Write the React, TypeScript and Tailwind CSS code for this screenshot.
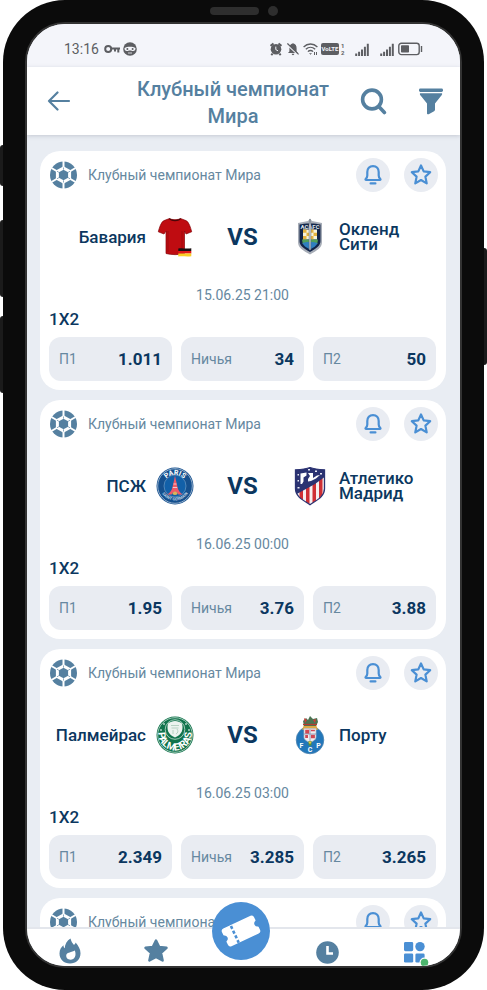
import type { ReactNode } from 'react'

type Team = { name: string; crest: ReactNode }
type Odd = { label: string; value: string }
type Match = { id: number; home: Team; away: Team; date: string; odds: Odd[] }

const LEAGUE = 'Клубный чемпионат Мира'

const MATCHES: Match[] = [
  {
    id: 1,
    home: { name: 'Бавария', crest: <BayernShirt /> },
    away: { name: 'Окленд Сити', crest: <AucklandCrest /> },
    date: '15.06.25 21:00',
    odds: [
      { label: 'П1', value: '1.011' },
      { label: 'Ничья', value: '34' },
      { label: 'П2', value: '50' },
    ],
  },
  {
    id: 2,
    home: { name: 'ПСЖ', crest: <ParisCrest /> },
    away: { name: 'Атлетико Мадрид', crest: <AtleticoCrest /> },
    date: '16.06.25 00:00',
    odds: [
      { label: 'П1', value: '1.95' },
      { label: 'Ничья', value: '3.76' },
      { label: 'П2', value: '3.88' },
    ],
  },
  {
    id: 3,
    home: { name: 'Палмейрас', crest: <PalmeirasCrest /> },
    away: { name: 'Порту', crest: <PortoCrest /> },
    date: '16.06.25 03:00',
    odds: [
      { label: 'П1', value: '2.349' },
      { label: 'Ничья', value: '3.285' },
      { label: 'П2', value: '3.265' },
    ],
  },
]

export default function App() {
  return (
    <div className="flex h-screen bg-white font-['Roboto',sans-serif]">
      <div className="flex w-[3px] shrink-0 flex-col pt-[145px]">
        <div className="h-[41px] rounded-l-sm bg-[#1b1b1b]" />
        <div className="mt-[34px] h-[77px] rounded-l-sm bg-[#1b1b1b]" />
        <div className="mt-[19px] h-[77px] rounded-l-sm bg-[#1b1b1b]" />
      </div>

      <div className="flex min-w-0 flex-1 flex-col rounded-[62px] bg-[#0b0b0b] px-[22px] pb-[22px]">
        <div className="flex h-[22px] shrink-0 items-center justify-center gap-[9px]">
          <div className="h-2 w-[49px] rounded-full bg-[#2e2e2e]" />
          <div className="size-[10px] rounded-full bg-[#2e2e2e]" />
        </div>
        <div className="flex min-h-0 flex-1 flex-col overflow-hidden rounded-[40px] border-2 border-[#333333] bg-[#e9edf3]">
          <StatusBar />
          <Header />
          <main className="flex min-h-0 flex-1 flex-col gap-[10px] overflow-hidden pt-4 pr-[14px] pl-[13px]">
            {MATCHES.map((match) => (
              <MatchCard key={match.id} match={match} />
            ))}
            <article className="shrink-0 rounded-[20px] bg-white pt-[7px] pr-[10px] pb-5 pl-[9px]">
              <CardHeader />
            </article>
          </main>
          <BottomNav />
        </div>
      </div>

      <div className="w-[3px] shrink-0 pt-[248px]">
        <div className="h-[117px] rounded-r-sm bg-[#1b1b1b]" />
      </div>
    </div>
  )
}

function StatusBar() {
  return (
    <div className="flex h-[43px] shrink-0 items-center bg-[#f4f5fa] px-[37px] pt-[7px] text-[#5d5e62]">
      <span className="text-[14px] leading-5">13:16</span>
      <svg className="ml-[5px] h-4 w-[16px]" viewBox="0 0 16 16" fill="none" stroke="currentColor" strokeWidth="2">
        <circle cx="4.200" cy="8" r="3" />
        <path d="M7 7.600h9M14.300 8v3.600M11 8v2.600" />
      </svg>
      <svg className="ml-[3px] size-[14px]" viewBox="0 0 14 14">
        <circle cx="7" cy="7" r="6.800" fill="currentColor" />
        <path d="M1.600 6C4 4.400 10 4.400 12.400 6c.5 1.500-.6 3-2.200 3-1.200 0-2-.6-3.200-.6S5 9 3.800 9C2.200 9 1.100 7.500 1.600 6z" fill="#f4f5fa" />
        <circle cx="4.400" cy="6.900" r="1" fill="currentColor" />
        <circle cx="9.600" cy="6.900" r="1" fill="currentColor" />
        <path d="M5 11h4" stroke="#f4f5fa" strokeWidth=".8" />
      </svg>

      <div className="ml-auto flex items-center">
        <svg className="h-[14px] w-3" viewBox="0 0 12 14">
          <circle cx="6" cy="7.200" r="5.300" fill="currentColor" />
          <path d="M.6 3.900L3.500 1.400M11.400 3.900L8.500 1.400M2.600 11.600l-1.300 1.500M9.400 11.600l1.300 1.500" stroke="currentColor" strokeWidth="2" />
          <path d="M5.800 4.600v3l2.200 1.200" fill="none" stroke="#f4f5fa" strokeWidth="1" />
        </svg>
        <svg className="ml-[5px] h-[14px] w-3" viewBox="0 0 12 14">
          <path d="M6 1.200c2.600.6 3.600 2.500 3.600 5V9.500l1.400 1.600H1l1.400-1.600V6.200C2.400 3.700 3.400 1.800 6 1.200zM4.700 11.800h2.600c0 1.800-2.600 1.800-2.600 0z" fill="currentColor" />
          <path d="M0 2.600l11.500 10.600" stroke="#f4f5fa" strokeWidth="1.400" />
          <path d="M.4 1.400l11.200 11" stroke="currentColor" strokeWidth="1.300" />
        </svg>
        <svg className="ml-1 h-[14px] w-[15px]" viewBox="0 0 15 14" fill="none" stroke="currentColor" strokeWidth="1.300">
          <path d="M.6 5c4-4 9.800-4 13.800 0M2.800 7.300c2.800-2.700 6.600-2.700 9.400 0M4.900 9.600c1.500-1.500 3.700-1.500 5.200 0" />
          <path d="M6 11.200h3l-1.500 1.600z" fill="currentColor" stroke="none" />
          <path d="M11.500 10v3M13.500 10v3" strokeWidth="1" />
        </svg>
        <span className="ml-[3px] flex h-3 w-[18px] items-center justify-center rounded-xs bg-[#5d5e62] text-[6px] leading-3 font-bold text-[#f4f5fa]">
          VoLTE
        </span>
        <span className="ml-[2px] flex w-1 flex-col text-[6px] leading-[7px] font-bold">
          <span>1</span>
          <span>2</span>
        </span>
        <SignalIcon className="ml-[10px] h-[13px] w-[14px]" />
        <SignalIcon className="ml-[11px] h-[13px] w-[14px]" />
        <svg className="ml-1 h-[14px] w-[25px]" viewBox="0 0 25 14">
          <rect x=".8" y="1.200" width="20.400" height="11.400" rx="2.600" fill="none" stroke="currentColor" strokeWidth="1.400" />
          <rect x="3" y="3.200" width="8" height="7.400" rx=".8" fill="currentColor" />
          <rect x="22.800" y="4" width="1.400" height="6" fill="currentColor" />
        </svg>
      </div>
    </div>
  )
}

function SignalIcon({ className }: { className: string }) {
  return (
    <svg className={className} viewBox="0 0 14 13" fill="currentColor">
      <path d="M.2 10.500h2V13H.2zM3.100 8.800h2V13h-2zM6 6.400h2V13H6zM8.900 3.800h2V13h-2zM11.800.8h2V13h-2z" />
    </svg>
  )
}

function Header() {
  return (
    <header className="relative flex h-[68px] shrink-0 items-center bg-white pr-[15px] pl-5 text-[#5580a0] shadow-[0_1px_4px_rgba(90,100,120,0.25)]">
      <button type="button" aria-label="Назад" className="flex size-6 items-center justify-center">
        <svg className="h-5 w-6" viewBox="0 0 24 20" fill="none" stroke="currentColor" strokeWidth="2.200" strokeLinecap="round" strokeLinejoin="round">
          <path d="M22 10H2M10.500 1.500L2 10l8.500 8.500" />
        </svg>
      </button>
      <h1 className="min-w-0 flex-1 pt-1 pr-6 pl-[60px] text-center text-[20px] leading-[27px] font-medium">{LEAGUE}</h1>
      <button type="button" aria-label="Поиск" className="flex size-7 items-center justify-center">
        <svg className="size-7" viewBox="0 0 28 28" fill="none" stroke="currentColor" strokeWidth="3.600" strokeLinecap="round">
          <circle cx="13" cy="12.500" r="9.400" />
          <path d="M19.800 19.500l5.600 6" />
        </svg>
      </button>
      <button type="button" aria-label="Фильтр" className="ml-[30px] flex size-7 items-center justify-center">
        <svg className="size-7" viewBox="0 0 28 28" fill="currentColor">
          <rect x="2" y="1.500" width="24" height="3.400" rx="1.400" />
          <path d="M3 6.300h22c.4 1-.1 1.700-.8 2.500l-6.200 7.700v6.300c0 .7-.3 1-.9 1.400l-5.400 3c-1 .4-1.700 0-1.700-1V16.500L3.800 8.800C3.100 8 2.600 7.300 3 6.300z" />
        </svg>
      </button>
    </header>
  )
}

function CardHeader() {
  return (
    <div className="-mr-[2px] flex items-center">
      <BallIcon />
      <span className="ml-[11px] flex-1 text-[14px] leading-5 text-[#6688a0]">{LEAGUE}</span>
      <button type="button" aria-label="Уведомления" className="flex size-[34px] items-center justify-center rounded-full bg-[#e9ecf2] text-[#4a8fd4]">
        <svg className="size-[22px]" viewBox="0 0 22 22" fill="none" stroke="currentColor" strokeWidth="2.200" strokeLinecap="round" strokeLinejoin="round">
          <path d="M11 2.200c-3.600 0-5.700 2.500-5.700 5.800v3.600c0 1.600-.6 2.500-1.500 3.200-.6.500-.3 1.200.4 1.200h13.600c.7 0 1-.7.4-1.200-.9-.7-1.500-1.600-1.500-3.200V8c0-3.300-2.100-5.800-5.700-5.800z" />
          <path d="M8.600 19.400h4.800" />
        </svg>
      </button>
      <button type="button" aria-label="В избранное" className="ml-[14px] flex size-[34px] items-center justify-center rounded-full bg-[#e9ecf2] text-[#4a8fd4]">
        <svg className="size-[22px]" viewBox="0 0 22 22" fill="none" stroke="currentColor" strokeWidth="2.200" strokeLinejoin="round">
          <path d="M11 1.500l2.700 5.900 6.500.8-4.800 4.400 1.300 6.800L11 16l-5.700 3.400 1.300-6.800L1.800 8.200l6.500-.8z" />
        </svg>
      </button>
    </div>
  )
}

function MatchCard({ match }: { match: Match }) {
  return (
    <article className="shrink-0 rounded-[20px] bg-white pt-[7px] pr-[10px] pb-[9px] pl-[9px]">
      <CardHeader />
      <div className="mt-5 grid h-[50px] grid-cols-[1fr_auto_1fr] items-center text-[#0b3760]">
        <div className="flex items-center justify-end gap-[10px]">
          <span className="text-right text-[17px] leading-[15px] font-medium">{match.home.name}</span>
          {match.home.crest}
        </div>
        <span className="w-[97px] text-center text-[24px] leading-7 font-bold">VS</span>
        <div className="flex items-center gap-[10px]">
          {match.away.crest}
          <span className="text-[17px] leading-[15px] font-medium">{match.away.name}</span>
        </div>
      </div>
      <p className="mt-[23px] text-center text-[14px] leading-5 text-[#6688a0]">{match.date}</p>
      <h2 className="mt-1 text-[17px] leading-5 font-medium text-[#0b3760]">1X2</h2>
      <div className="mt-2 grid grid-cols-3 gap-[9px]">
        {match.odds.map((odd) => (
          <button
            key={odd.label}
            type="button"
            className="flex h-11 items-center justify-between rounded-[12px] bg-[#e9ecf2] px-[10px]"
          >
            <span className="text-[14px] leading-5 text-[#6688a0]">{odd.label}</span>
            <span className="text-[17px] leading-5 font-bold text-[#0b3760]">{odd.value}</span>
          </button>
        ))}
      </div>
    </article>
  )
}

function BottomNav() {
  const item = 'flex flex-1 justify-center pt-[9px]'
  return (
    <nav className="relative flex h-[39px] shrink-0 border-t-2 border-[#e3e6ec] bg-white pr-1 text-[#5580a0]">
      <a href="#hot" aria-label="Горячее" className={item}>
        <svg className="h-[26px] w-[22px]" viewBox="0 0 22 26">
          <path d="M11.500.5c.8 3 1.800 4.500 3.500 6.500 1-.7 1.400-1.500 1.600-2.400C19.500 8 21.500 11.500 21.500 15.200 21.500 21.500 17 25.500 11 25.500S.5 21.500.5 15.500c0-4 1.800-6.500 4-8.200 0 1.300.3 2.200 1.200 3C6 6 8 2.500 11.500.5z" fill="currentColor" />
          <path d="M15.800 12.500c2 5-.3 9.300-4.300 9.300-3 0-4.500-2-4.300-4.200.2-3.400 4.300-2.800 8.600-5.100z" fill="white" />
        </svg>
      </a>
      <a href="#favorites" aria-label="Избранное" className={item}>
        <svg className="size-[26px]" viewBox="0 0 26 26" fill="currentColor" stroke="currentColor" strokeWidth="2.500" strokeLinejoin="round">
          <path d="M13 2.500l3.200 6.500 7.300.8-5.500 5.100 1.600 7.600L13 18.800l-6.600 3.700L8 14.900 2.500 9.800 9.800 9z" />
        </svg>
      </a>
      <div className="relative flex-1">
        <a
          href="#coupon"
          aria-label="Купон"
          className="absolute -top-[27px] left-1/2 flex size-[58px] -translate-x-1/2 items-center justify-center rounded-full bg-[#4a8fd4]"
        >
          <svg className="h-[34px] w-[40px]" viewBox="0 0 40 34">
            <g transform="rotate(-25 20 17)">
              <path d="M5 8h30c1.200 0 2 .8 2 2v3.200a4 4 0 0 0 0 7.600V24c0 1.200-.8 2-2 2H5c-1.200 0-2-.8-2-2v-3.200a4 4 0 0 0 0-7.600V10c0-1.200.8-2 2-2z" fill="white" stroke="white" strokeWidth="1.400" strokeLinejoin="round" />
              <path d="M13 8.200v18.500" stroke="#4a8fd4" strokeWidth="2.600" strokeDasharray="3.200 2" />
            </g>
          </svg>
        </a>
      </div>
      <a href="#history" aria-label="История" className={item}>
        <svg className="size-[26px]" viewBox="0 0 26 26">
          <circle cx="13.500" cy="14.500" r="11.300" fill="currentColor" />
          <path d="M13.500 8v7.500H19" fill="none" stroke="white" strokeWidth="2.600" />
        </svg>
      </a>
      <a href="#menu" aria-label="Меню" className={item}>
        <svg className="h-[30px] w-[26px] overflow-visible" viewBox="-2 -2 26 30" fill="#4a8fd4">
          <rect x="2" y="2" width="9.200" height="9.200" rx="1.400" />
          <circle cx="18" cy="6.600" r="4.700" />
          <rect x="2" y="13.400" width="9.200" height="9.200" rx="1.400" />
          <rect x="13.400" y="13.400" width="9.200" height="9.200" rx="1.400" />
          <circle cx="22.500" cy="22.500" r="5" fill="white" />
          <circle cx="22.500" cy="22.500" r="3.800" fill="#4cb56d" />
        </svg>
      </a>
    </nav>
  )
}

function BallIcon() {
  return (
    <svg className="size-7 shrink-0" viewBox="0 0 28 28">
      <circle cx="14.500" cy="14" r="13.500" fill="#5580a0" />
      <path d="M14.500 5.200l7.600 4.400v8.800l-7.600 4.400-7.600-4.400V9.600z" fill="white" />
      <path d="M14.500 0v6M14.500 22v6M2.400 7l5.200 3M21.400 18l5.200 3M2.400 21l5.200-3M21.400 10l5.200-3" stroke="white" strokeWidth="2" />
      <path d="M14.500 8.700l4.600 2.650v5.300l-4.600 2.650-4.600-2.650v-5.300z" fill="#5580a0" />
      <path d="M9.900 11.350L8 10.200M19.100 11.350L21 10.200M9.900 16.650L8 17.800M19.100 16.650L21 17.800M14.500 8.700V6.500M14.500 19.300v2.200" stroke="#8fabc0" strokeWidth="1" />
    </svg>
  )
}

function BayernShirt() {
  return (
    <svg className="h-10 w-[38px] shrink-0" viewBox="0 0 38 40">
      <path d="M13.500 1.500C15 3 23 3 24.500 1.500l6 2.300c2.500 1.800 4 6.500 5.200 11L30 17l-1.500-3v22.500c-5 1.500-13.500 1.500-18.500 0V14l-2 3-5.700-2.200C3.500 10.300 5 5.600 7.500 3.800z" fill="#bf0c11" stroke="#850509" strokeWidth=".7" />
      <path d="M13.500 1.500c1.500 2.800 9.500 2.800 11 0" fill="none" stroke="#4a0508" strokeWidth="1.400" />
      <path d="M12 14v21M26 14v21" stroke="#9f0a0e" strokeWidth="1" />
      <path d="M22.300 31.500c4-.8 8 .5 13-.2V34H22.300z" fill="#181010" />
      <path d="M22.300 34h13v2.600h-13z" fill="#e01818" />
      <path d="M22.300 36.600h13v2.600c-5 .8-9-.5-13 .3z" fill="#f9cf24" />
    </svg>
  )
}

function AucklandCrest() {
  return (
    <svg className="h-10 w-[38px] shrink-0" viewBox="0 0 38 40">
      <path d="M19 1.500l2 2.500 10 2v19c0 6-5 8.500-12 12.500C12 33.500 7 31 7 25V6l10-2z" fill="#a7adb7" />
      <path d="M8.500 7.500C13 6 25 6 29.500 7.500V24c0 5-4.500 7.500-10.500 11C13 31.500 8.500 29 8.500 24z" fill="#122448" />
      <text x="19" y="11.500" fontSize="6" fontWeight="700" textAnchor="middle" fill="#dfe4ec">ACAFC</text>
      <path d="M12 12.500h14v10H12z" fill="#f7f3dc" />
      <path d="M12 12.500h3.500v3.300H12zM19 12.500h3.500v3.300H19zM15.500 15.800H19v3.300h-3.500zM22.500 15.800H26v3.300h-3.500zM12 19.100h3.500v3.400H12zM19 19.100h3.500v3.400H19z" fill="#e5b440" />
      <path d="M11 22.500h16l-.8 4.500H11.800z" fill="#51a05a" />
      <path d="M11.300 26c3-1.500 12.400-1.500 15.400 0-1.500 3-4 4.500-7.700 6.500-3.700-2-6.200-3.500-7.700-6.500z" fill="#2f7fc0" />
      <path d="M19 2l1 6-.3 25h-1.400L18 8z" fill="#d7dbe1" stroke="#59616e" strokeWidth=".5" />
    </svg>
  )
}

function ParisCrest() {
  return (
    <svg className="size-[38px] shrink-0" viewBox="0 0 38 38">
      <circle cx="19" cy="19" r="18.500" fill="#15508e" />
      <circle cx="19" cy="19" r="17.300" fill="none" stroke="#c8d6e4" strokeWidth=".7" />
      <circle cx="19" cy="19" r="11" fill="#1260a8" stroke="#8fb2d3" strokeWidth=".5" />
      <path id="paris-top" d="M7.400 18A11.700 11.700 0 0 1 30.600 18" fill="none" />
      <text fontSize="7" fontWeight="700" fill="white" textAnchor="middle">
        <textPath href="#paris-top" startOffset="50%">PARIS</textPath>
      </text>
      <path id="paris-bottom" d="M3.800 21A15.500 15.500 0 0 0 34.200 21" fill="none" />
      <text fontSize="4" fontWeight="700" fill="#bcd0e4" textAnchor="middle">
        <textPath href="#paris-bottom" startOffset="50%">SAINT-GERMAIN</textPath>
      </text>
      <path d="M19 8.500l1 5 1.600 7c.8 3 2.400 5.500 5.200 7h-4.500c-1.500-3.200-5-3.200-6.600 0h-4.500c2.800-1.500 4.400-4 5.200-7l1.600-7z" fill="#ee5a68" />
      <path d="M16.800 20.500h4.400M17.500 17h3" stroke="#f3d4da" strokeWidth=".9" />
      <path d="M16.500 27c0-3.500 5-3.500 5 0-1.500 1.200-3.500 1.200-5 0z" fill="#d9b65a" />
    </svg>
  )
}

function AtleticoCrest() {
  return (
    <svg className="h-10 w-[38px] shrink-0" viewBox="0 0 38 40">
      <clipPath id="atletico-shield">
        <path d="M4.500 3.800C10 3.500 15 3 19 1.500c4 1.500 9 2 14.500 2.300v19c0 8-8 11.500-14.500 16C12.500 34.300 4.500 30.800 4.500 22.800z" />
      </clipPath>
      <g clipPath="url(#atletico-shield)">
        <path d="M0 0h38v40H0z" fill="#f6eeee" />
        <path d="M8.500 12H12v28H8.500zM15 12h3.500v28H15zM21.500 12H25v28h-3.500zM28 12h3.500v28H28z" fill="#cf2f34" />
        <path d="M0 0h38v8L24 18 4 29H0z" fill="#2b3372" />
        <path d="M9.500 18V7.500l6-1v3l-3 2v4l-1.500 2.500zM17 7h5v5l4-2.500 3-.5-4 3.500-5 2.500-3 .5V13l2-3z" fill="white" />
        <path d="M6.500 8h1.500v1.500H6.500zM6.500 14h1.500v1.500H6.500zM6.500 21h2v1.500h-2zM17 3h2v1.500h-2zM24 4.500h2V6h-2zM29 7h2v1.500h-2z" fill="#e8eaf4" />
      </g>
      <path d="M4.500 3.800C10 3.500 15 3 19 1.500c4 1.500 9 2 14.500 2.300v19c0 8-8 11.500-14.500 16C12.500 34.300 4.500 30.800 4.500 22.800z" fill="none" stroke="#2b3372" strokeWidth="1.300" />
    </svg>
  )
}

function PalmeirasCrest() {
  return (
    <svg className="size-[38px] shrink-0" viewBox="0 0 38 38">
      <circle cx="19" cy="19" r="18.500" fill="#10734c" />
      <circle cx="19" cy="19" r="17.300" fill="none" stroke="#dcebe3" strokeWidth=".7" />
      <circle cx="19" cy="13.500" r="9.800" fill="none" stroke="#dcebe3" strokeWidth=".7" />
      <path d="M12 7.500c4-3.500 10-3.500 14 0 1.500 6 0 11-7 14-7-3-8.500-8-7-14z" fill="#edf3ef" />
      <path d="M15 9.500h8M15.500 12h7M17 14v4M21 13c1.500 2 1 4-1 5" fill="none" stroke="#a9c9b8" strokeWidth=".8" />
      <path d="M4 14l1-1 1 1-1 1zM7 8l1-1 1 1-1 1zM32 14l1-1 1 1-1 1zM29 8l1-1 1 1-1 1z" fill="white" />
      <path id="palmeiras-name" d="M2.500 16A16.600 16.600 0 1 0 35.500 16" fill="none" />
      <text fontSize="10" fontWeight="700" fill="white" textAnchor="middle">
        <textPath href="#palmeiras-name" startOffset="50%">PALMEIRAS</textPath>
      </text>
    </svg>
  )
}

function PortoCrest() {
  return (
    <svg className="h-10 w-[38px] shrink-0" viewBox="0 0 38 40">
      <circle cx="19" cy="25" r="13.800" fill="#2277ba" stroke="#4c83ae" strokeWidth=".8" />
      <path d="M13 10h12l2 4.500c-4 1.500-12 1.500-16 0z" fill="#dcaa45" />
      <path d="M12 6l3-3 2 2 2-4 3 3 4-1 1 4-2 4H13z" fill="#4b7351" />
      <path d="M13 3l3 2-2 3zM22 5l3-1-1 4z" fill="#cf3b38" />
      <path d="M12 9.500h14" stroke="#b53a30" strokeWidth="1.300" />
      <path d="M13 13.500h12V22c0 3-3 4-6 5.500C16 26 13 25 13 22z" fill="#f1eef0" stroke="#b5b9c2" strokeWidth=".7" />
      <path d="M14.200 14.800h4v4h-4zM19.900 19.700h4v3.600h-4zM19.900 14.800h4v1.500h-4zM14.200 20h2.800v3h-2.800z" fill="#cf4955" />
      <path d="M19 14v12M13 19h12" stroke="#6f85ab" strokeWidth=".7" />
      <path d="M17.500 26h3v4l-1.500 1-1.500-1z" fill="#53933f" />
      <circle cx="19" cy="27.500" r="1.200" fill="#e8c343" />
      <text x="10.500" y="33" fontSize="7" fontWeight="700" textAnchor="middle" fill="white">F</text>
      <text x="19" y="37" fontSize="7" fontWeight="700" textAnchor="middle" fill="white">C</text>
      <text x="27.500" y="33" fontSize="7" fontWeight="700" textAnchor="middle" fill="white">P</text>
    </svg>
  )
}
